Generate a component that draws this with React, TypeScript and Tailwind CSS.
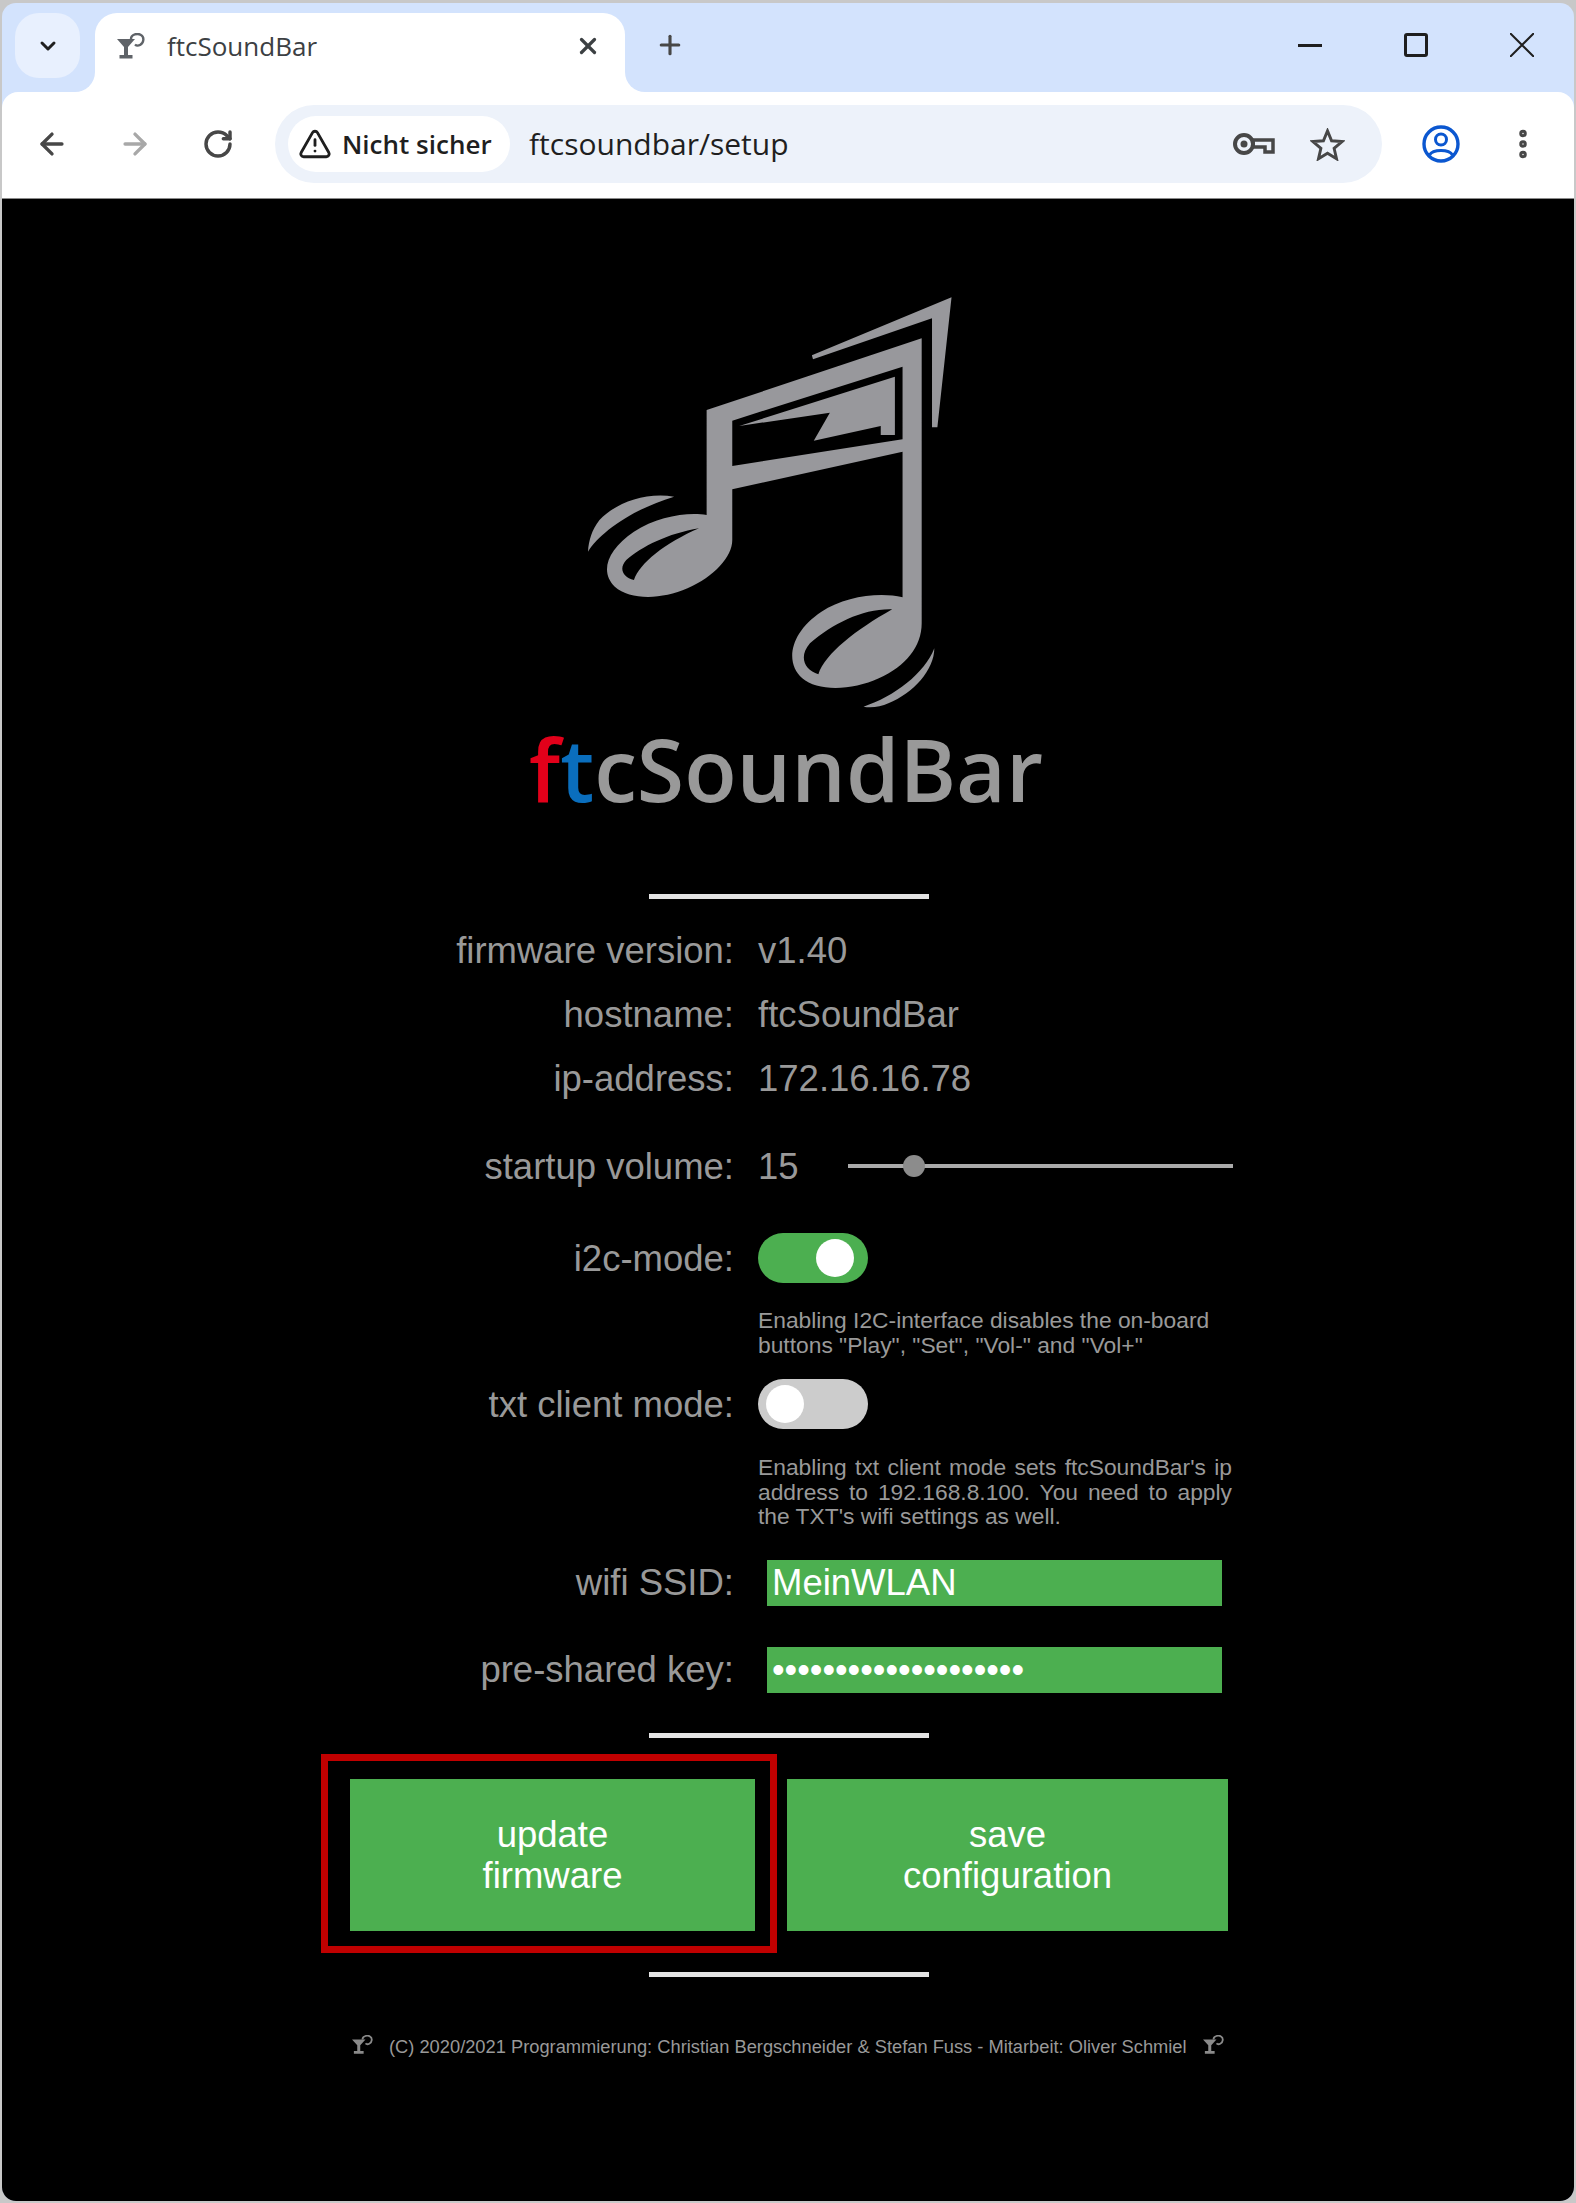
import React from "react";
import { ChevronDown, X, Plus, ArrowLeft, ArrowRight, RotateCw, TriangleAlert, EllipsisVertical } from "lucide-react";

const Glass = ({ className, color = "#5f6368" }: { className: string; color?: string }) => (
  <svg viewBox="0 0 28 26" className={className} preserveAspectRatio="none">
    <path d="M0 6 H18 L11 14 V22 H15.5 V25.5 H2.5 V22 H7 V14 Z" fill={color} />
    <path d="M14 6 C14 1 21 0 24 2 C27.500 4 27 10 23 12 C21 13 19 12.500 18 11.500" fill="none" stroke={color} strokeWidth="2.400" />
  </svg>
);

const Logo = () => (
  <svg viewBox="0 0 1568 1380" preserveAspectRatio="none" className="block w-[600px] h-[460px] ml-[168px]">
    <path
      fill="#98989c"
      fillRule="evenodd"
      d="M815 256 L1180 82 L1143 472 L1129 472 L1129 145 L818 268 Z
         M540 420 L1102 205 L1102 1060 C1102 1130 1060 1190 990 1225 C920 1262 830 1265 790 1225 C745 1180 755 1090 840 1025 C900 980 990 965 1052 982 L1052 545 L607 658 L607 810 C607 860 560 920 490 955 C420 990 340 990 300 950 C260 905 280 840 350 785 C410 740 490 725 540 735 Z
         M607 452 L1052 290 L1052 508 L607 588 Z
         M625 468 L1032 320 L1032 495 L995 495 L995 468 L820 512 L862 428 Z
         M520 775 C440 790 370 830 330 870 C310 895 320 920 350 930 C365 880 430 820 520 775 Z
         M1025 1018 C950 1015 870 1060 810 1120 C780 1160 795 1200 832 1213 C850 1150 930 1080 1025 1018 Z
         M455 680 C380 665 300 700 260 750 C240 780 232 810 230 845 C260 790 340 720 455 680 Z
         M1135 1135 C1135 1200 1080 1270 1015 1300 C995 1310 970 1315 950 1310 C1030 1280 1110 1210 1135 1135 Z"
    />
  </svg>
);

const Rule = ({ className = "" }: { className?: string }) => (
  <div className={`h-[5px] w-[280px] ml-[317px] bg-[#e4e4e4] ${className}`} />
);

const Row = ({ label, className = "", children }: { label: string; className?: string; children: React.ReactNode }) => (
  <div className={`flex items-center ${className}`}>
    <div className="w-[402px] mr-[24px] text-right text-[36.5px] leading-[41px] text-[#999999] whitespace-nowrap">{label}</div>
    {children}
  </div>
);

const Toggle = ({ on }: { on: boolean }) => (
  <div className={`flex w-[110px] h-[50px] rounded-full items-center ${on ? "bg-[#4caf50] justify-end pr-[14px]" : "bg-[#cccccc] justify-start pl-[8px]"}`}>
    <div className="w-[38px] h-[38px] rounded-full bg-white" />
  </div>
);

const Help = ({ className = "", children }: { className?: string; children: React.ReactNode }) => (
  <div className={`ml-[426px] w-[474px] text-[22.8px] leading-[24.6px] text-[#999999] text-justify ${className}`}>{children}</div>
);

const GreenButton = ({ className, a, b }: { className: string; a: string; b: string }) => (
  <button className={`h-[152px] bg-[#4caf50] text-white text-[36.5px] leading-[41px] text-center ${className}`}>
    {a}
    <br />
    {b}
  </button>
);

export default function App() {
  return (
    <div className="w-[1576px] h-[2203px] bg-[#c8c8c8] pt-[3px] px-[2px] pb-[2px] font-['Liberation_Sans',sans-serif]">
      <div className="flex flex-col h-full rounded-[14px] overflow-hidden bg-[#d3e3fd]">
        {/* tab strip */}
        <div className="flex h-[89px] shrink-0 items-start pt-[10px] pl-[13px]">
          <div className="flex w-[65px] h-[65px] items-center justify-center rounded-[24px] bg-[#e8f0fe]">
            <ChevronDown className="w-[24px] h-[24px] text-[#1f1f1f]" strokeWidth={3} />
          </div>
          <div className="relative flex items-center w-[530px] h-[79px] ml-[15px] bg-white rounded-t-[22px] pl-[22px] pb-[14px]">
            <div className="absolute left-[-20px] bottom-0 w-[20px] h-[20px] bg-white">
              <div className="w-full h-full bg-[#d3e3fd] rounded-br-[20px]" />
            </div>
            <div className="absolute right-[-20px] bottom-0 w-[20px] h-[20px] bg-white">
              <div className="w-full h-full bg-[#d3e3fd] rounded-bl-[20px]" />
            </div>
            <Glass className="w-[28px] h-[26px]" />
            <span className="ml-[22px] text-[26px] leading-[30px] text-[#3c4043] font-['Open_Sans',sans-serif]">ftcSoundBar</span>
            <X className="ml-auto mr-[24px] w-[26px] h-[26px] text-[#3c4043]" strokeWidth={3} />
          </div>
          <Plus className="ml-[30px] mt-[17px] w-[30px] h-[30px] text-[#474747]" strokeWidth={2.5} />
          <div className="ml-auto flex h-[64px] items-center">
            <div className="flex w-[106px] justify-center">
              <div className="w-[24px] h-[3px] bg-[#1f1f1f]" />
            </div>
            <div className="flex w-[106px] justify-center">
              <div className="w-[24px] h-[24px] rounded-[3px] border-[3px] border-[#1f1f1f]" />
            </div>
            <div className="flex w-[105px] justify-center">
              <svg viewBox="0 0 24 24" className="w-[24px] h-[24px]">
                <path d="M0 0 L24 24 M24 0 L0 24" stroke="#1f1f1f" strokeWidth="2" fill="none" />
              </svg>
            </div>
          </div>
        </div>
        {/* toolbar */}
        <div className="flex h-[107px] shrink-0 items-center bg-white rounded-t-[16px] pl-[8px] pb-[2px] border-b border-[#8a8a8a]">
          <div className="flex w-[83px] justify-center">
            <ArrowLeft className="w-[34px] h-[34px] text-[#474747]" strokeWidth={2.4} />
          </div>
          <div className="flex w-[83px] justify-center">
            <ArrowRight className="w-[34px] h-[34px] text-[#a8a8a8]" strokeWidth={2.4} />
          </div>
          <div className="flex w-[83px] justify-center">
            <RotateCw className="w-[32px] h-[32px] text-[#474747]" strokeWidth={2.6} />
          </div>
          <div className="flex items-center w-[1107px] h-[78px] ml-[16px] rounded-full bg-[#edf2fa] pl-[13px] pr-[37px]">
            <div className="flex items-center w-[222px] h-[56px] rounded-full bg-white pl-[10px]">
              <TriangleAlert className="w-[34px] h-[34px] text-[#1f1f1f]" strokeWidth={2} />
              <span className="ml-[10px] text-[26px] leading-[32px] font-semibold text-[#1f1f1f] font-['Open_Sans',sans-serif]">Nicht sicher</span>
            </div>
            <span className="ml-[19px] text-[30px] leading-[36px] text-[#1f1f1f] font-['Open_Sans',sans-serif]">ftcsoundbar/setup</span>
            <svg viewBox="0 0 42 24" className="ml-auto w-[42px] h-[24px]">
              <circle cx="11" cy="12" r="9" fill="none" stroke="#474747" strokeWidth="4" />
              <circle cx="11" cy="12" r="3.5" fill="#474747" />
              <path d="M20 8 H40 V20 H32 V15 H20 Z" fill="none" stroke="#474747" strokeWidth="3.5" />
            </svg>
            <svg viewBox="0 0 36 34" className="ml-[35px] w-[35px] h-[33px]">
              <polygon
                points="18,3 22.2,13.2 33,14 24.8,21 27.3,31.7 18,26 8.7,31.7 11.2,21 3,14 13.8,13.2"
                fill="none"
                stroke="#474747"
                strokeWidth="3"
              />
            </svg>
          </div>
          <div className="flex w-[82px] ml-[18px] justify-center">
            <svg viewBox="0 0 38 38" className="w-[38px] h-[38px]">
              <circle cx="19" cy="19" r="17" fill="none" stroke="#0b57d0" strokeWidth="3.4" />
              <circle cx="19" cy="14.5" r="5.5" fill="none" stroke="#0b57d0" strokeWidth="3" />
              <path d="M7.5 30 C11 24 27 24 30.5 30" fill="none" stroke="#0b57d0" strokeWidth="3" />
            </svg>
          </div>
          <div className="flex w-[82px] justify-center">
            <EllipsisVertical className="w-[36px] h-[36px] text-[#474747]" strokeWidth={3} />
          </div>
        </div>
        {/* page */}
        <div className="flex-1 bg-black flex flex-col items-center">
          <div className="w-[912px]">
            <div className="pt-[71px]">
              <Logo />
            </div>
            <div className="pl-[197px] h-[120px] mt-[-6px] text-[86px] leading-[90px] font-semibold text-[#999999] font-['Open_Sans',sans-serif] whitespace-nowrap">
              <span className="text-[#e2001a]">f</span>
              <span className="text-[#0a6ebd]">t</span>cSoundBar
            </div>
            <Rule className="mt-[50px]" />
            <Row label="firmware version:" className="h-[64px] mt-[19px]">
              <span className="text-[36.5px] leading-[41px] text-[#999999]">v1.40</span>
            </Row>
            <Row label="hostname:" className="h-[64px]">
              <span className="text-[36.5px] leading-[41px] text-[#999999]">ftcSoundBar</span>
            </Row>
            <Row label="ip-address:" className="h-[64px]">
              <span className="text-[36.5px] leading-[41px] text-[#999999]">172.16.16.78</span>
            </Row>
            <Row label="startup volume:" className="h-[64px] mt-[24px]">
              <span className="w-[90px] text-[36.5px] leading-[41px] text-[#999999]">15</span>
              <div className="relative w-[385px] h-[4px] bg-[#aaaaaa]">
                <div className="absolute left-[55px] top-[-9px] w-[22px] h-[22px] rounded-full bg-[#8c8c8c]" />
              </div>
            </Row>
            <Row label="i2c-mode:" className="mt-[35px]">
              <Toggle on />
            </Row>
            <Help className="mt-[25px] text-left">
              Enabling I2C-interface disables the on-board buttons "Play", "Set", "Vol-" and "Vol+"
            </Help>
            <Row label="txt client mode:" className="mt-[22px]">
              <Toggle on={false} />
            </Row>
            <Help className="mt-[26px]">
              Enabling txt client mode sets ftcSoundBar's ip address to 192.168.8.100. You need to apply the TXT's wifi settings as well.
            </Help>
            <Row label="wifi SSID:" className="mt-[31px]">
              <input
                readOnly
                value="MeinWLAN"
                className="ml-[9px] w-[455px] h-[46px] bg-[#4caf50] text-white text-[36.5px] pl-[5px] outline-none"
              />
            </Row>
            <Row label="pre-shared key:" className="mt-[41px]">
              <input
                readOnly
                type="password"
                value="12345678901234567890"
                className="ml-[9px] w-[455px] h-[46px] bg-[#4caf50] text-white text-[36px] pl-[5px] outline-none"
              />
            </Row>
            <Rule className="mt-[40px]" />
            <div className="flex mt-[41px] ml-[18px]">
              <div className="relative w-[405px]">
                <GreenButton className="w-[405px]" a="update" b="firmware" />
                <div className="absolute left-[-29px] top-[-25px] w-[456px] h-[199px] border-[7px] border-[#c00000]" />
              </div>
              <GreenButton className="w-[441px] ml-[32px]" a="save" b="configuration" />
            </div>
            <Rule className="mt-[41px]" />
            <div className="flex items-center mt-[58px] ml-[20px]">
              <Glass className="w-[21px] h-[19px] mb-[4px]" color="#8a8a8a" />
              <span className="mx-[16px] text-[18.3px] leading-[24px] text-[#999999] whitespace-nowrap">
                (C) 2020/2021 Programmierung: Christian Bergschneider &amp; Stefan Fuss - Mitarbeit: Oliver Schmiel
              </span>
              <Glass className="w-[21px] h-[19px] mb-[4px]" color="#8a8a8a" />
            </div>
          </div>
        </div>
      </div>
    </div>
  );
}
